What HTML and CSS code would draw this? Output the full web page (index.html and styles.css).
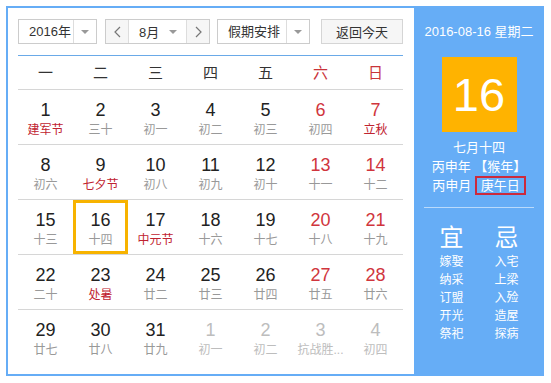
FILE: index.html
```html
<!DOCTYPE html>
<html lang="zh-CN">

<head>
    <meta charset="UTF-8">
    <meta name="viewport" content="width=device-width, initial-scale=1.0">
    <title>万年历</title>
    <link rel="stylesheet" href="styles.css">
</head>

<body>
    <div class="calendar">
        <!-- Left: month view -->
        <div class="main">
            <div class="toolbar">
                <div class="select year-select">
                    <span class="select-text">2016年</span>
                    <span class="select-arrow"><i class="caret"></i></span>
                </div>
                <div class="month-group">
                    <span class="nav-btn">
                        <svg width="7" height="12" viewBox="0 0 7 12"><polyline points="6,1 1,6 6,11" fill="none" stroke="#777" stroke-width="1.2"/></svg>
                    </span>
                    <span class="month-text">8月<i class="caret"></i></span>
                    <span class="nav-btn">
                        <svg width="7" height="12" viewBox="0 0 7 12"><polyline points="1,1 6,6 1,11" fill="none" stroke="#777" stroke-width="1.2"/></svg>
                    </span>
                </div>
                <div class="select holiday-select">
                    <span class="select-text">假期安排</span>
                    <span class="select-arrow"><i class="caret"></i></span>
                </div>
                <button class="today-btn">返回今天</button>
            </div>

            <div class="weekdays">
                <span>一</span>
                <span>二</span>
                <span>三</span>
                <span>四</span>
                <span>五</span>
                <span class="weekend">六</span>
                <span class="weekend">日</span>
            </div>

            <div class="days">
                <div class="day"><b>1</b><small class="fest">建军节</small></div>
                <div class="day"><b>2</b><small>三十</small></div>
                <div class="day"><b>3</b><small>初一</small></div>
                <div class="day"><b>4</b><small>初二</small></div>
                <div class="day"><b>5</b><small>初三</small></div>
                <div class="day weekend"><b>6</b><small>初四</small></div>
                <div class="day weekend"><b>7</b><small class="fest">立秋</small></div>

                <div class="day"><b>8</b><small>初六</small></div>
                <div class="day"><b>9</b><small class="fest">七夕节</small></div>
                <div class="day"><b>10</b><small>初八</small></div>
                <div class="day"><b>11</b><small>初九</small></div>
                <div class="day"><b>12</b><small>初十</small></div>
                <div class="day weekend"><b>13</b><small>十一</small></div>
                <div class="day weekend"><b>14</b><small>十二</small></div>

                <div class="day"><b>15</b><small>十三</small></div>
                <div class="day today"><b>16</b><small>十四</small></div>
                <div class="day"><b>17</b><small class="fest">中元节</small></div>
                <div class="day"><b>18</b><small>十六</small></div>
                <div class="day"><b>19</b><small>十七</small></div>
                <div class="day weekend"><b>20</b><small>十八</small></div>
                <div class="day weekend"><b>21</b><small>十九</small></div>

                <div class="day"><b>22</b><small>二十</small></div>
                <div class="day"><b>23</b><small class="fest">处暑</small></div>
                <div class="day"><b>24</b><small>廿二</small></div>
                <div class="day"><b>25</b><small>廿三</small></div>
                <div class="day"><b>26</b><small>廿四</small></div>
                <div class="day weekend"><b>27</b><small>廿五</small></div>
                <div class="day weekend"><b>28</b><small>廿六</small></div>

                <div class="day last"><b>29</b><small>廿七</small></div>
                <div class="day last"><b>30</b><small>廿八</small></div>
                <div class="day last"><b>31</b><small>廿九</small></div>
                <div class="day last other"><b>1</b><small>初一</small></div>
                <div class="day last other"><b>2</b><small>初二</small></div>
                <div class="day last other"><b>3</b><small>抗战胜...</small></div>
                <div class="day last other"><b>4</b><small>初四</small></div>
            </div>
        </div>

        <!-- Right: selected day detail -->
        <aside class="side">
            <div class="side-date">2016-08-16 星期二</div>
            <div class="big-day">16</div>
            <div class="lunar">
                <p>七月十四</p>
                <p>丙申年 【猴年】</p>
                <p>丙申月 <span class="ganzhi">庚午日</span></p>
            </div>
            <div class="divider"></div>
            <div class="almanac">
                <div class="almanac-col">
                    <h3>宜</h3>
                    <p>嫁娶</p>
                    <p>纳采</p>
                    <p>订盟</p>
                    <p>开光</p>
                    <p>祭祀</p>
                </div>
                <div class="almanac-col">
                    <h3>忌</h3>
                    <p>入宅</p>
                    <p>上梁</p>
                    <p>入殓</p>
                    <p>造屋</p>
                    <p>探病</p>
                </div>
            </div>
        </aside>
    </div>
</body>

</html>
```

FILE: styles.css
```css
/* Reset */

* {
    margin: 0;
    padding: 0;
    box-sizing: border-box;
}

body {
    font-family: Arial, "Liberation Sans", "Noto Sans CJK SC", sans-serif;
    background-color: #fff;
    color: #333;
}

/* Calendar frame */

.calendar {
    display: flex;
    width: 538px;
    height: 370px;
    margin: 6px 0 0 6px;
    padding: 2px 0 2px 2px;
    background-color: #66adf6;
}

.main {
    width: 406px;
    background-color: #fff;
    padding: 11px 11px 0 10px;
}

/* Toolbar */

.toolbar {
    display: flex;
    height: 25px;
    font-size: 13px;
}

.select,
.month-group {
    display: flex;
    border: 1px solid #ccc;
    background: #fff;
}

.year-select {
    width: 79px;
}

.holiday-select {
    width: 93px;
    margin-left: 7px;
}

.select-text {
    flex: 1;
    line-height: 23px;
    padding-left: 10px;
}

.select-arrow {
    width: 23px;
    border-left: 1px solid #ddd;
    display: flex;
    align-items: center;
    justify-content: center;
}

.caret {
    display: inline-block;
    width: 0;
    height: 0;
    border-left: 4px solid transparent;
    border-right: 4px solid transparent;
    border-top: 4px solid #999;
}

.month-group {
    width: 105px;
    margin-left: 8px;
}

.nav-btn {
    width: 22px;
    background: #f6f6f6;
    display: flex;
    align-items: center;
    justify-content: center;
}

.month-text {
    flex: 1;
    border-left: 1px solid #ddd;
    border-right: 1px solid #ddd;
    display: flex;
    align-items: center;
    justify-content: space-between;
    padding: 0 9px 0 10px;
}

.today-btn {
    width: 82px;
    margin-left: 11px;
    border: 1px solid #d5d5d5;
    background: #f6f6f6;
    font: inherit;
    color: #333;
    cursor: pointer;
}

/* Weekday header */

.weekdays {
    display: grid;
    grid-template-columns: repeat(7, 55px);
    margin-top: 11px;
    border-top: 1px solid #6aaae8;
    border-bottom: 1px solid #d6d6d6;
}

.weekdays span {
    text-align: center;
    font-size: 15px;
    line-height: 33px;
}

.weekdays .weekend {
    color: #c9343a;
}

/* Days grid */

.days {
    display: grid;
    grid-template-columns: repeat(7, 55px);
}

.day {
    height: 55px;
    border-bottom: 1px solid #d6d6d6;
    padding-top: 9px;
    text-align: center;
}

.day.last {
    border-bottom: none;
}

.day b {
    display: block;
    font-weight: normal;
    font-size: 18px;
    line-height: 22px;
    color: #222;
}

.day small {
    display: block;
    font-size: 12px;
    line-height: 18px;
    color: #999;
    white-space: nowrap;
}

.day.weekend b {
    color: #d0353d;
}

.day small.fest {
    color: #bf2330;
}

.day.other b,
.day.other small {
    color: #bdbdbd;
}

.day.today {
    box-shadow: inset 0 0 0 3px #f7b300;
}

/* Side panel */

.side {
    width: 130px;
    color: #fff;
    text-align: center;
    padding: 14px 10px 0;
}

.side-date {
    font-size: 13px;
    line-height: 20px;
}

.big-day {
    width: 75px;
    height: 75px;
    margin: 15px auto 0;
    background-color: #ffb300;
    font-size: 47px;
    line-height: 75px;
}

.lunar {
    margin-top: 6px;
    font-size: 13px;
    line-height: 19px;
}

.ganzhi {
    border: 2px solid #cc2a3c;
    padding: 0 4px;
}

.divider {
    height: 1px;
    margin-top: 12px;
    background-color: rgba(255, 255, 255, 0.55);
}

.almanac {
    display: flex;
    margin-top: 15px;
}

.almanac-col {
    width: 55px;
}

.almanac-col h3 {
    font-size: 24px;
    font-weight: normal;
    line-height: 30px;
}

.almanac-col p {
    font-size: 12px;
    line-height: 18px;
}
```
